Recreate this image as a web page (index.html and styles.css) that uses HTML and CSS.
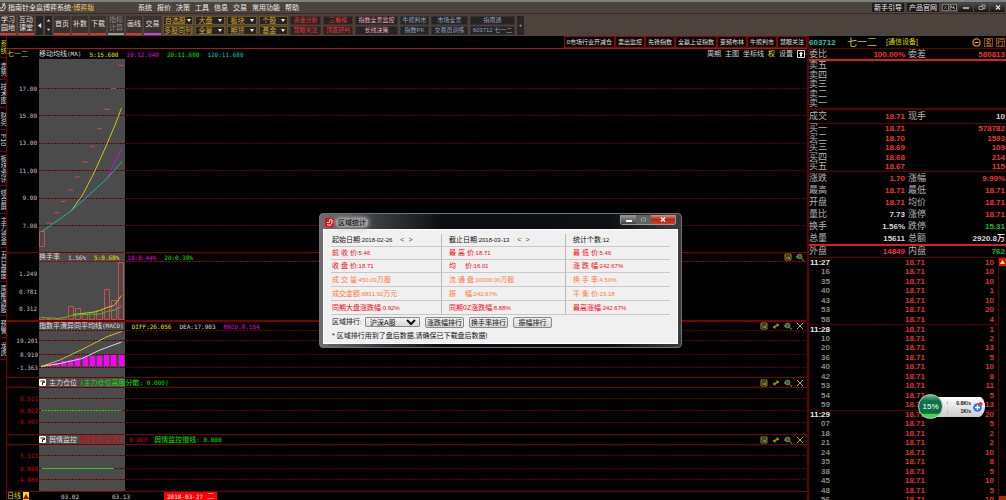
FILE: index.html
```html
<!DOCTYPE html>
<html lang="zh-CN">
<head>
<meta charset="utf-8">
<title>指南针全赢博弈系统</title>
<link rel="stylesheet" href="styles.css">
</head>
<body>
<svg class="defs" aria-hidden="true">
  <symbol id="i-box" viewBox="0 0 8 8"><path d="M1 1h6v6H1zM1 3h6" fill="none" stroke="#8c8c1e"/><path d="M2 4h2v2H2z" fill="#c22"/><path d="M4 4h2v2H4z" fill="#2a9"/></symbol>
  <symbol id="i-swap" viewBox="0 0 8 8"><path d="M4.500 1l3 2-3 2zM3.500 3L.5 5l3 2z" fill="#a0a010"/><path d="M2 5l4-2" stroke="#a0a010"/></symbol>
  <symbol id="i-zoom" viewBox="0 0 8 8"><circle cx="3.600" cy="3.500" r="2.400" fill="#266" stroke="#7c8a1e"/><path d="M5.500 5.500L8 7.500M0 4h2" stroke="#a0a010"/></symbol>
  <symbol id="i-x" viewBox="0 0 8 8"><path d="M1 1l6 6M7 1L1 7" stroke="#b4b414" fill="none"/></symbol>
  <symbol id="i-help" viewBox="0 0 7 7"><rect width="7" height="7" rx="1" fill="#ffe"/><path d="M1.500 2h4v1.500h-2v2.500" fill="none" stroke="#221"/></symbol>
</svg>
<div class="app">
  <header class="titlebar">
    <svg class="logo" viewBox="0 0 8 9"><path d="M0 7q4 2 5-2T2 1M0 5q3 1 3-2M5 0l-2 3" fill="none" stroke="#ddd"/></svg>
    <h1 class="title">指南针全赢博弈系统·<span class="gold">博弈版</span></h1>
    <nav class="menu">
      <button>系统</button><button>报价</button><button>决策</button><button>工具</button><button>信息</button><button>交易</button><button>常用功能</button><button>帮助</button>
    </nav>
    <div class="sys">
      <a class="link" href="#">新手引导</a><a class="link" href="#">产品官网</a>
      <button class="tiny" aria-label="邮件"><svg viewBox="0 0 7 7"><path d="M1 1l5 5M6 1L1 6" fill="none" stroke="#999"/></svg></button>
      <button class="tiny" aria-label="工具设置"><svg viewBox="0 0 7 7"><path d="M3 3l3 3M1 1v3h3V1" fill="none" stroke="#ddd"/></svg></button>
      <button class="win" aria-label="最小化"><svg viewBox="0 0 8 7"><path d="M1 4h6" stroke="#ccc" stroke-width="1.500"/></svg></button>
      <button class="win" aria-label="还原"><svg viewBox="0 0 8 7"><path d="M1 2.500h4v3H1zM3 1h4v3.500H5" fill="none" stroke="#bbb" stroke-width=".8"/></svg></button>
      <button class="win" aria-label="关闭"><svg viewBox="0 0 8 7"><path d="M2 1.500l4 4M6 1.500l-4 4" stroke="#ddd" stroke-width="1.300"/></svg></button>
    </div>
  </header>

  <div class="toolbar">
    <button class="tool">学习<br>园地</button>
    <button class="tool">互动<br>课堂</button>
    <button class="arrow" aria-label="向左"><svg viewBox="0 0 8 8"><path d="M6 1v6L2 4z" fill="#ddd"/></svg></button>
    <div class="updown">
      <button aria-label="向上"><svg viewBox="0 0 8 8"><path d="M2 5h4L4 2.500z" fill="#ddd"/></svg></button>
      <button aria-label="向下"><svg viewBox="0 0 8 8"><path d="M2 3h4L4 5.500z" fill="#ddd"/></svg></button>
    </div>
    <button class="tool">首页</button>
    <button class="tool">补数</button>
    <button class="tool">下载</button>
    <button class="tool off">指标<br>计算</button>
    <button class="tool">画线</button>
    <button class="tool trade">交易</button>
    <div class="quick">
      <button class="q-gold">自选股<i class="dn"></i></button><button class="q-gold">大盘<i class="dn"></i></button><button class="q-gold">板块<i class="dn"></i></button><button class="q-gold">个股<i class="dn"></i></button><button class="q-red">资金分析</button><button class="q-red">三看榜</button><button class="q-pink">指数全景监控</button><button>牛熊判市</button><button>市场全景</button><button>指南通</button>
      <button class="q-gold">多股同列</button><button class="q-gold">全景<i class="dn"></i></button><button class="q-gold">期货<i class="dn"></i></button><button class="q-gold">基金<i class="dn"></i></button><button class="q-red">慧眼关注</button><button class="q-red">顶底研判</button><button class="q-pink">长线决策</button><button>指数PK</button><button>交易员训练</button><button>603712 七一二</button>
    </div>
    <button class="more">+</button>
  </div>

  <main class="work">
    <nav class="side">
      <button class="s22 on">系统</button><button class="s22">走势</button><button class="s28">技术图</button><button class="s22">财务</button><button class="s22">F10</button><button class="s34">板块资讯</button><button class="s28">综合屏</button><button class="s34">主力资金</button><button class="s34">五日盘面</button><button class="s34">周期选股</button><button class="s22">预警</button><button class="s22">龙虎</button>
    </nav>

    <section class="charts">
      <div class="tags">
        <button>0市场行业开减仓</button><button>卖出监控</button><button>先锋指数</button><button>全赢上证指数</button><button>变频布林</button><button>牛熊判市</button><button>慧眼关注</button>
      </div>
      <article class="pane main-pane">
        <div class="bar tall">
          <span class="stock">七一二</span>
          <span class="w">移动均线<b>(MA)</b></span><b class="y">5:15.600</b><b class="m">10:12.640</b><b class="g">20:11.680</b><b class="c">120:11.680</b>
          <div class="opts"><button>周期</button><button>主图</button><button>坐标线</button><button class="y">权</button><button>设置</button>
            <button class="up" aria-label="展开"><svg viewBox="0 0 8 8"><path d="M.5.5h7v7h-7z" fill="none" stroke="#ddd"/><path d="M4 1.500l2.200 2.500H5v2.500H3V4H1.800z" fill="#fff"/></svg></button></div>
        </div>
        <svg class="plot h193"><g transform="translate(-7 -59)">
          <path class="dots" d="M39 88.500H3000M39 115.500H3000M39 143.500H3000M39 170.500H3000M39 198.500H3000M39 225.500H3000"/>
          <g class="ax"><text x="37" y="91">17.00</text><text x="37" y="118">15.00</text><text x="37" y="145">13.00</text><text x="37" y="173">11.00</text><text x="37" y="200">9.00</text><text x="37" y="228">7.00</text></g>
          <path class="marks" d="M46 223h6M54 212.700h5M61 201.300h5M68 190h5M75 177h5M82 162h6M90 146.300h5M97 128.700h5M104 109.300h6M111 88.300h5M118 65.300h6"/>
          <rect class="candle" x="39.500" y="231.500" width="5" height="15"/>
          <path class="ly" d="M71 211L82 196 93 175 107 144 115 125 121.500 108"/>
          <path class="lm" d="M107 178.500L121.500 148.500"/>
          <path class="lc" d="M42 231.500L71 211 83 200.500 107 178.500 121.500 162"/>
        </g></svg>
      </article>

      <article class="pane sel">
        <div class="bar"><span class="w">换手率</span><b class="w">1.56%</b><b class="y">5:0.68%</b><b class="m">10:0.44%</b><b class="g">20:0.38%</b>
          <div class="icons"><svg><use href="#i-box"/></svg><svg><use href="#i-zoom"/></svg></div></div>
        <svg class="plot h59"><g transform="translate(-7 -261)">
          <path class="dots red" d="M39 261.500H3000"/>
          <g class="ax"><text x="37" y="276">1.249</text><text x="37" y="294">0.781</text><text x="37" y="311">0.312</text></g>
          <path class="candle" d="M39.500 319.500v-2h5v2zM46.500 319.500v-1h5v1zM53.500 319.500v-1h6v1zM60.500 319.500v-2h6v2zM68.500 319.500v-13h5v13zM75.500 319.500v-11h5v11zM82.500 319.500v-5h5v5zM89.500 319.500v-7h5v7zM96.500 319.500v-9h6v9zM104.500 319.500v-30h5v30zM111.500 319.500v-19h5v19zM118.500 319.500v-57h5v57z"/>
          <path class="ly" d="M73 314.500L87 313 97 311.500 107 307.500 114 305.500 121.500 295.500"/>
          <path class="lm" d="M107 311.500L115 309 121.500 304.500"/>
          <path class="lg" d="M41 317.500L60 318.500 72 315.500 83 314.500 100 314 107 311.500 115 310 121.500 306.500"/>
        </g></svg>
      </article>

      <article class="pane sel thick">
        <div class="bar"><span class="w">指数平滑异同平均线<b>(MACD)</b></span><b class="y">DIFF:26.056</b><b class="w">DEA:17.903</b><b class="m">MACD:8.154</b>
          <div class="icons"><svg><use href="#i-box"/></svg><svg><use href="#i-swap"/></svg><svg><use href="#i-zoom"/></svg><svg><use href="#i-x"/></svg></div></div>
        <svg class="plot h47"><g transform="translate(-7 -330)">
          <path class="dots" d="M39 330.500H3000M39 340.500H3000M39 354.500H3000M39 367.500H3000"/>
          <g class="ax"><text x="38" y="343">19.201</text><text x="38" y="357">8.919</text><text x="38" y="370">-1.363</text></g>
          <path fill="#f0f" d="M47 366v-2h5v2zM54 366v-3h5v3zM61 366v-5h5v5zM68 366v-6h5v6zM75 366v-8h5v8zM83 366v-9h5v9zM90 366v-10h5v10zM97 366v-10h5v10zM104 366v-11h5v11zM111 366v-11h5v11zM119 366v-11h5v11z"/>
          <path class="ly" d="M41 366.500L60 360 83 349 107 336.700 121.500 331.500"/>
          <path class="lw" d="M41 366.500L60 363.500 82 358.500 100 350 121.500 342"/>
        </g></svg>
      </article>

      <article class="pane sel">
        <div class="bar tall9"><svg class="help"><use href="#i-help"/></svg><span class="w">主力仓位</span><span class="g near"><b>[</b>主力仓位高度分散<b>: 0.000]</b></span>
          <div class="icons"><svg><use href="#i-box"/></svg><svg><use href="#i-swap"/></svg><svg><use href="#i-zoom"/></svg><svg><use href="#i-x"/></svg></div></div>
        <svg class="plot h47"><g transform="translate(-7 -387)">
          <path class="rule" d="M7 387.500H3000"/>
          <path class="dots" d="M39 398.500H3000M39 410.500H3000M39 422.500H3000"/>
          <g class="ax r"><text x="38" y="401">0.511</text><text x="38" y="413">0.022</text><text x="38" y="424">-0.467</text></g>
          <path class="lg dash" d="M42 410.500H121"/>
        </g></svg>
      </article>

      <article class="pane sel">
        <div class="bar tall9"><svg class="help"><use href="#i-help"/></svg><span class="w">舆情监控</span><span class="r near">舆情监控快线<b>: 0.000</b></span><span class="g near">舆情监控慢线<b>: 0.000</b></span>
          <div class="icons"><svg><use href="#i-box"/></svg><svg><use href="#i-swap"/></svg><svg><use href="#i-zoom"/></svg><svg><use href="#i-x"/></svg></div></div>
        <svg class="plot h47"><g transform="translate(-7 -444)">
          <path class="rule" d="M7 444.500H3000"/>
          <path class="dots" d="M39 455.500H3000M39 468.500H3000M39 479.500H3000"/>
          <g class="ax r"><text x="38" y="458">5.111</text><text x="38" y="471">0.000</text><text x="38" y="482">-4.889</text></g>
          <path class="lg" d="M42 468.500H114"/>
        </g></svg>
      </article>

      <footer class="dates">
        <button class="period">日线</button><button class="tri" aria-label="切换周期"><svg viewBox="0 0 6 7"><path d="M0 6h6L3 1z" fill="#a00"/></svg></button>
        <b class="d1">03.02</b><b class="d2">03.13</b><span class="today"><b>2018-03-27</b> 二</span>
      </footer>
    </section>

    <aside class="quote">
      <div class="q-head"><b class="code">603712</b><span class="name">七一二</span><span class="sector">[通信设备]</span>
        <span class="badges"><svg viewBox="0 0 9 9"><circle cx="4.500" cy="4.500" r="3.600" fill="none" stroke="#e08020" stroke-width="1.300"/><path d="M2.500 4.500h4" stroke="#ffb060"/></svg><button>名</button><button>行</button></span></div>
      <table class="grid r10 line"><tr><th>委比</th><td>100.00%</td><th>委差</th><td>580813</td></tr></table>
      <table class="grid alt hot"><tr><th>卖五</th><td></td><td></td><td></td></tr><tr><th>卖四</th></tr><tr><th>卖三</th></tr><tr><th>卖二</th></tr><tr><th>卖一</th></tr></table>
      <table class="grid r13 line two"><tr><th>成交</th><td>18.71</td><th>现手</th><td class="wt">10</td></tr></table>
      <table class="grid alt line"><tr><th>买一</th><td>18.71</td><th></th><td>578782</td></tr><tr><th>买二</th><td>18.70</td><th></th><td>1593</td></tr><tr><th>买三</th><td>18.69</td><th></th><td>109</td></tr><tr><th>买四</th><td>18.68</td><th></th><td>214</td></tr><tr><th>买五</th><td>18.67</td><th></th><td>115</td></tr></table>
      <table class="grid r12 line"><tr><th>涨跌</th><td>1.70</td><th>涨幅</th><td>9.99%</td></tr><tr><th>最高</th><td>18.71</td><th>最低</th><td>18.71</td></tr><tr><th>开盘</th><td>18.71</td><th>均价</th><td>18.71</td></tr><tr><th>量比</th><td class="wt">7.73</td><th>涨停</th><td>18.71</td></tr><tr><th>换手</th><td class="wt">1.56%</td><th>跌停</th><td class="gn">15.31</td></tr><tr><th>总量</th><td class="wt">15611</td><th>总额</th><td class="wt">2920.8万</td></tr></table>
      <table class="grid r11 hot"><tr><th>外盘</th><td>14849</td><th>内盘</th><td class="gn">762</td></tr></table>
      <div class="tape">
        <table class="ticks">
          <tr class="min"><th>11:27</th><td>18.71</td><td>10</td></tr><tr><th>16</th><td>18.71</td><td>10</td></tr><tr><th>35</th><td>18.71</td><td>10</td></tr><tr><th>40</th><td>18.71</td><td>1</td></tr><tr><th>43</th><td>18.71</td><td>10</td></tr><tr><th>53</th><td>18.71</td><td>20</td></tr><tr><th>58</th><td>18.71</td><td>4</td></tr>
          <tr class="min"><th>11:28</th><td>18.71</td><td>1</td></tr><tr><th>10</th><td>18.71</td><td>2</td></tr><tr><th>20</th><td>18.71</td><td>13</td></tr><tr><th>36</th><td>18.71</td><td>5</td></tr><tr><th>40</th><td>18.71</td><td>10</td></tr><tr><th>42</th><td>18.71</td><td>8</td></tr><tr><th>53</th><td>18.71</td><td>11</td></tr><tr><th>54</th><td>18.71</td><td>5</td></tr><tr><th>59</th><td>18.71</td><td>13</td></tr>
          <tr class="min"><th>11:29</th><td>18.71</td><td>20</td></tr><tr><th>07</th><td>18.71</td><td>5</td></tr><tr><th>18</th><td>18.71</td><td>2</td></tr><tr><th>21</th><td>18.71</td><td>2</td></tr><tr><th>24</th><td>18.71</td><td>10</td></tr><tr><th>35</th><td>18.71</td><td>8</td></tr><tr><th>38</th><td>18.71</td><td>5</td></tr><tr><th>45</th><td>18.71</td><td>10</td></tr><tr><th>48</th><td>18.71</td><td>5</td></tr><tr><th>56</th><td>18.71</td><td>10</td></tr>
        </table>
        <div class="scroll"><button aria-label="上翻"><svg viewBox="0 0 7 8"><path d="M1 6h5L3.500 2z" fill="#ff6"/></svg></button><span class="thumb"></span></div>
      </div>
    </aside>
  </main>
</div>

<section class="dialog" role="dialog" aria-labelledby="dlg-title">
  <header class="dlg-bar">
    <svg class="dlg-logo" viewBox="0 0 9 9"><rect width="9" height="9" rx="1" fill="#e0101c"/><path d="M2 6.500q4 2 5-2T4 2M2 4.500q3 1 3-2" fill="none" stroke="#fff"/></svg>
    <h2 id="dlg-title"><span class="glow">区域统计</span></h2>
    <div class="dlg-win"><button aria-label="最小化"><svg viewBox="0 0 15 9"><path d="M5 6h6" stroke="#fff" stroke-width="2"/></svg></button><button class="dim" aria-label="最大化" disabled><svg viewBox="0 0 15 9"><path d="M5.500 3h4v3h-4z" fill="none" stroke="#999"/></svg></button><button class="close" aria-label="关闭"><svg viewBox="0 0 24 9"><path d="M10 2.500l4 4M14 2.500l-4 4" stroke="#fff" stroke-width="1.500"/></svg></button></div>
  </header>
  <div class="dlg-body">
    <table class="stats">
      <tr class="k"><td>起始日期<b>:2018-02-26</b><button class="step">&lt;</button><button class="step">&gt;</button></td><td>截止日期<b>:2018-03-13</b><button class="step">&lt;</button><button class="step">&gt;</button></td><td>统计个数<b>:12</b></td></tr>
      <tr><td>前 收 价<b>:5.46</b></td><td>最 高 价<b>:18.71</b></td><td>最 低 价<b>:5.46</b></td></tr>
      <tr><td>收 盘 价<b>:18.71</b></td><td>均　 价<b>:16.01</b></td><td>涨 跌 幅<b>:242.67%</b></td></tr>
      <tr class="o"><td>成 交 量<b>:450.09</b>万股</td><td>流 通 盘<b>:10000.00</b>万股</td><td>换 手 率<b>:4.50%</b></td></tr>
      <tr class="o"><td>成交金额<b>:6831.92</b>万元</td><td>振　 幅<b>:242.67%</b></td><td>平 衡 价<b>:15.18</b></td></tr>
      <tr><td>同期大盘涨跌幅<b>:0.92%</b></td><td>同期0Z涨跌幅<b>:8.88%</b></td><td>最高涨幅<b>:242.67%</b></td></tr>
    </table>
    <div class="rank"><label for="market">区域排行<b>:</b></label><select id="market"><option>沪深A股</option></select><button>涨跌幅排行</button><button>换手率排行</button><button>振幅排行</button></div>
    <p class="note">* 区域排行用到了盘后数据,请确保已下载盘后数据!</p>
  </div>
</section>

<div class="speed">
  <span class="ball">15%</span>
  <span class="rates"><span><i class="ru">↑</i>0.8K/s</span><span><i class="rd">↓</i>1K/s</span></span>
  <svg class="plus" viewBox="0 0 10 12"><circle cx="4.500" cy="6.500" r="4.300" fill="#2f76d2"/><path d="M2 6.500h5M4.500 4v5" stroke="#fff" stroke-width="1.300"/><circle cx="7.500" cy="3" r="2" fill="#e33"/></svg>
</div>
</body>
</html>
```
FILE: styles.css
```css
* { box-sizing: border-box; }
body {
  margin: 0;
  background: #000;
  color: #d0d0d0;
  font: 7px/8px "Liberation Sans", "Noto Sans CJK SC", sans-serif;
  overflow: hidden;
}
button {
  margin: 0;
  padding: 0;
  border: 0;
  background: none;
  color: inherit;
  font: inherit;
  white-space: nowrap;
}
h1, h2, p { margin: 0; font: inherit; }
b { font: 6px/7px "DejaVu Sans Mono", monospace; }
i { font-style: normal; }
a { color: inherit; text-decoration: none; }
svg { display: block; }
table { border-collapse: collapse; border-spacing: 0; }
td, th { padding: 0; }
.defs { display: none; }
.app { display: flex; flex-direction: column; height: 100vh; overflow: hidden; }

/* title bar */
.titlebar {
  display: flex;
  align-items: center;
  flex: none;
  height: 14px;
  border-top: 2px solid #7d8280;
  border-bottom: 1px solid #352a26;
  background: #4c433d;
  color: #ecebe8;
}
.logo { width: 8px; height: 9px; }
.title { width: 130px; white-space: nowrap; }
.gold { color: #e6c860; }
.menu { display: flex; gap: 5px; flex: 1; }
.sys { display: flex; align-items: center; gap: 1px; height: 10px; padding-right: 1px; }
.link { padding: 0 2px; margin-right: 2px; height: 10px; line-height: 9px; background: #1c1b1d; border-bottom: 1px solid #644; }
.tiny { width: 7px; height: 7px; background: #151515; border: 1px solid #777; }
.win { width: 15px; height: 9px; background: linear-gradient(#4a4a4c, #151516); }
.win svg { width: 8px; height: 7px; margin: 0 auto; }

/* toolbar */
.toolbar { display: flex; align-items: center; gap: 2px; flex: none; height: 22px; background: #4c433d; color: #e2dfda; }
.tool {
  width: 16px;
  height: 19px;
  background: #39322f;
  border-bottom: 2px solid #d03a26;
}
.off { color: #908a86; border-color: #9a9a9a; }
.trade { border-color: #d040d0; width: 17px; }
.arrow, .updown { width: 7px; height: 19px; background: #272322; }
.updown button { display: block; width: 7px; height: 9px; }
.quick {
  display: grid;
  grid-template-columns: 30px 30px 30px 29px 31px 30px 43px 29px 37px 45px;
  grid-auto-rows: 9px;
  gap: 1px 2px;
  font-size: 6px;
  line-height: 7px;
}
.quick button { background: #262324; border: 1px solid #38312e; color: #8ca6c4; }
.quick .q-gold { display: flex; align-items: center; justify-content: space-around; border-color: #6c5518; color: #d6a92e; font-size: 7px; }
.quick .q-red { color: #f03434; border-color: #4e2a26; }
.quick .q-pink { color: #f0a8c0; }
.dn { border: 2px solid transparent; border-top: 3px solid #f4f0e0; border-bottom: 0; }
.more { width: 7px; height: 19px; background: #2b2625; font-size: 6px; color: #b0b0c0; }

/* work area */
.work { display: flex; flex: 1; min-height: 0; }
.side { flex: none; width: 7px; border-right: 1px solid #7c0000; overflow: hidden; }
.side button {
  display: flex;
  align-items: center;
  justify-content: center;
  writing-mode: vertical-rl;
  width: 6px;
  border-bottom: 1px solid #7c0000;
  overflow: hidden;
}
.side .on { color: #dcdc00; }
.s22 { height: 22px; }
.s28 { height: 28px; }
.s34 { height: 34px; }

.charts { display: flex; flex-direction: column; flex: 1; min-width: 0; }
.tags { display: flex; justify-content: flex-end; height: 12px; font-size: 6px; line-height: 8px; }
.tags button { padding: 0 2px; border: 1px solid #900000; color: #e4e4e4; }
.pane { flex: none; border-top: 1px solid #7c0000; }
.main-pane { border-color: #a81818; }
.thick { border-top-width: 2px; }
.sel { background: linear-gradient(90deg, transparent 32px, #4b4b4b 32px, #4b4b4b 118px, transparent 118px); }
.bar { display: flex; align-items: center; gap: 8px; height: 8px; padding-left: 32px; white-space: nowrap; }
.tall { height: 10px; padding-left: 0; }
.tall9 { height: 9px; gap: 3px; }
.near + .near { margin-left: 4px; }
.stock { width: 24px; color: #c8c800; }
.opts { display: flex; align-items: center; gap: 4px; margin-left: auto; padding-right: 2px; }
.up svg { width: 8px; height: 8px; }
.icons { display: flex; gap: 4px; margin-left: auto; padding-right: 3px; }
.icons svg { width: 8px; height: 8px; }
.help { width: 7px; height: 7px; }
.w { color: #dcdcdc; }
.y { color: #e8e800; }
.m { color: #e800e8; }
.g { color: #00e400; }
.c { color: #00c8c8; }
.r { color: #d80000; }

.plot { width: 100%; overflow: hidden; }
.h193 { height: 193px; background: linear-gradient(90deg, transparent 32px, #4b4b4b 32px, #4b4b4b 118px, transparent 118px); }
.h59 { height: 59px; }
.h47 { height: 47px; }
.plot path, .candle { stroke-width: 1; }
.dots { fill: none; stroke: #640000; stroke-dasharray: 2 1; }
.red { stroke: #900; }
.rule { stroke: #7c0000; }
.ax { fill: #c0c0c0; font: 6px "DejaVu Sans Mono", monospace; text-anchor: end; }
.ax.r { fill: #d00000; }
.marks, .candle { fill: none; stroke: #c85050; }
.ly { fill: none; stroke: #c8c820; }
.lm { fill: none; stroke: #d010d0; }
.lc { fill: none; stroke: #20b4b4; }
.lg { fill: none; stroke: #30c810; }
.lw { fill: none; stroke: #d8d8d8; }
.dash { stroke-dasharray: 2 1; }

.dates { display: flex; align-items: flex-start; height: 9px; border-top: 1px solid #7c0000; overflow: hidden; }
.period { width: 16px; color: #d8d800; text-align: left; }
.tri { width: 6px; height: 8px; background: #e8e800; }
.d1 { width: 51px; margin-left: 32px; }
.d2 { width: 52px; }
.d1, .d2 { line-height: 9px; }
.today { display: flex; gap: 4px; padding: 0 3px; height: 8px; background: #f00; color: #fff; }
.today b { line-height: 9px; }

/* quote panel */
.quote { display: flex; flex-direction: column; flex: none; width: 199px; border-left: 2px solid #600000; }
.q-head { display: flex; align-items: center; flex: none; height: 12px; padding-right: 1px; }
.code { width: 38px; color: #20c8b4; font: bold 8px/9px "Liberation Sans", sans-serif; }
.name { width: 39px; color: #c8c800; font-size: 10px; line-height: 11px; }
.sector { color: #d8d800; }
.badges { display: flex; gap: 3px; margin-left: auto; }
.badges svg { width: 9px; height: 9px; }
.badges button { width: 9px; height: 9px; border: 1px solid #8a4a10; color: #f09838; line-height: 7px; }
.grid { width: 100%; table-layout: fixed; flex: none; border-collapse: separate; }
.grid th { width: 22px; color: #b4b4b4; font-weight: normal; font-size: 9px; text-align: left; white-space: nowrap; }
.grid tr { line-height: 9px; }
.grid td { color: #f03434; font-size: 8px; font-weight: bold; text-align: right; padding-right: 1px; }
.grid th:first-child { width: 20px; }
.grid td:nth-child(2) { width: 79px; padding-right: 3px; }
.line { border-top: 1px solid #600000; }
.two { border-top-width: 2px; }
.hot { border-top: 2px solid #d82020; }
.r10 tr { height: 10px; }
.r11 tr { height: 11px; }
.r12 tr { height: 12px; }
.r13 tr { height: 13px; }
.alt tr { height: 9px; }
.alt tr:nth-child(even) { height: 10px; }
.grid .wt { color: #d8d8d8; }
.grid .gn { color: #10c010; }
.tape { display: flex; flex: 1; min-height: 0; border-top: 1px solid #600000; overflow: hidden; }
.ticks { flex: 1; align-self: flex-start; table-layout: fixed; font-size: 8px; line-height: 8px; border-collapse: separate; }
.ticks tr { height: 9px; }
.ticks tr:nth-child(even) { height: 10px; }
.ticks th { width: 21px; color: #888; font-weight: bold; text-align: right; }
.ticks td { color: #e03030; font-weight: bold; text-align: right; }
.ticks td:nth-child(2) { width: 95px; }
.ticks td:last-child { padding-right: 4px; }
.ticks .min th { color: #e8e8e8; }
.ticks tr.min:not(:first-child) > * { border-top: 1px solid #500000; }
.scroll { display: flex; flex-direction: column; justify-content: space-between; width: 8px; border-left: 1px solid #600000; }
.scroll button { width: 7px; height: 8px; background: #e01010; }
.thumb { height: 4px; background: #a03010; }

/* statistics dialog */
.dialog {
  position: absolute;
  left: 319px;
  top: 213px;
  width: 363px;
  padding: 1px 3px 3px;
  border: 1px solid #707478;
  border-radius: 4px;
  background: linear-gradient(90deg, #6c6e70, #3a3d40 16%, #0a0e12 34%, #0c1014 80%, #3c3c3c);
  color: #111;
}
.dialog b { font-family: "Liberation Sans", sans-serif; }
.dlg-bar { display: flex; align-items: flex-start; height: 14px; padding: 0 2px; gap: 2px; }
.dlg-logo { width: 9px; height: 9px; margin-top: 3px; }
.dlg-bar h2 { flex: 1; margin-top: 3px; line-height: 9px; color: #000; }
.glow { display: inline-block; padding: 0 2px; border-radius: 4px; background: #9a9c9e; box-shadow: 0 0 4px 1px #9a9c9e; }
.dlg-win { display: flex; border: 1px solid #999; border-top: 0; border-radius: 0 0 3px 3px; overflow: hidden; }
.dlg-win button { width: 15px; height: 9px; background: linear-gradient(#999, #444); }
.dlg-win .dim { background: #606366; border: 0; }
.dlg-win .close { width: 24px; background: linear-gradient(#d89080, #b82814 50%, #c84020); }
.dlg-body { background: #f0f0f0; border: 1px solid #fff; padding: 4px 7px 3px 7px; }
.stats { width: 100%; table-layout: fixed; color: #f80818; border-collapse: separate; }
.stats tr { height: 14px; }
.stats tr:nth-child(-n+3) { height: 13px; }
.stats td { padding-left: 7px; border-bottom: 1px solid #c8c8c8; white-space: nowrap; }
.stats td:first-child { width: 110px; padding-left: 1px; }
.stats td:nth-child(2) { width: 124px; }
.stats td + td { border-left: 1px solid #b8b8b8; }
.stats .k { color: #111; }
.stats .o { color: #ff7840; }
.step { margin-left: 4px; color: #444; }
.step:first-of-type { margin-left: 8px; }
.rank { display: flex; align-items: center; gap: 5px; height: 14px; padding-left: 1px; }
.rank label { width: 28px; white-space: nowrap; }
.rank select {
  width: 55px;
  height: 10px;
  padding: 0;
  border: 1px solid #888;
  border-radius: 1px;
  background: linear-gradient(#f4f4f4, #d8d8d8);
  color: #111;
  font: inherit;
}
.rank button { width: 39px; height: 11px; border: 1px solid #888; border-radius: 2px; background: linear-gradient(#f4f4f4, #d4d4d4); line-height: 9px; }
.note { padding: 2px 1px 0; line-height: 9px; }

/* network speed float */
.speed {
  position: absolute;
  right: 21px;
  top: 394px;
  display: flex;
  align-items: center;
  width: 67px;
  height: 25px;
  background: linear-gradient(#fff, #ccc) right center / 54px 20px no-repeat;
  border-radius: 12px;
  color: #111;
}
.ball {
  width: 25px;
  height: 25px;
  border: 1px solid #b8c8c0;
  border-radius: 50%;
  background: linear-gradient(#7ab898, #0c7448 25%, #0a6c42 80%, #4ad050 82%);
  color: #fff;
  font-size: 8px;
  line-height: 23px;
  text-align: center;
}
.rates { display: flex; flex-direction: column; flex: 1; margin-left: 3px; font-size: 5px; font-weight: bold; }
.rates span { display: flex; justify-content: space-between; }
.ru { color: #e02020; font-size: 6px; }
.rd { color: #10a050; font-size: 6px; }
.plus { width: 10px; height: 12px; margin: 0 2px; }
```
